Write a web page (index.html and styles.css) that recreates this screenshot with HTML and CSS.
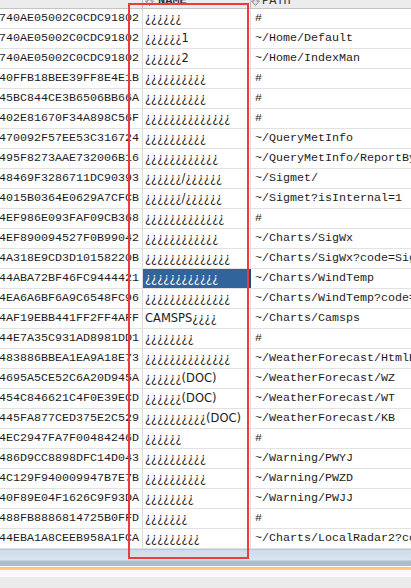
FILE: index.html
```html
<!DOCTYPE html>
<html lang="en">
<head>
    <meta charset="UTF-8">
    <meta name="viewport" content="width=device-width, initial-scale=1.0">
    <title>Menu Table</title>
    <link rel="stylesheet" href="styles.css">
</head>
<body>

    <div class="view">
        <div class="grid">
            <!-- column headers, scrolled mostly out of view -->
            <div class="head">
                <div class="hcell"></div>
                <div class="hcell name-head">
                    <svg class="sort" width="9" height="9" viewBox="0 0 9 9"><path d="M3 0.5 H6 V4 H8.5 L4.5 8.5 L0.5 4 H3 Z"/></svg>
                    <span class="htext bold">NAME</span>
                </div>
                <div class="hcell path-head">
                    <svg class="sort" width="9" height="9" viewBox="0 0 9 9"><path d="M3 0.5 H6 V4 H8.5 L4.5 8.5 L0.5 4 H3 Z"/></svg>
                    <span class="htext">PATH</span>
                </div>
            </div>

            <div class="row"><div class="id">740AE05002C0CDC91802</div><div class="name">¿¿¿¿¿¿</div><div class="path">#</div></div>
            <div class="row"><div class="id">740AE05002C0CDC91802</div><div class="name">¿¿¿¿¿¿1</div><div class="path">~/Home/Default</div></div>
            <div class="row"><div class="id">740AE05002C0CDC91802</div><div class="name">¿¿¿¿¿¿2</div><div class="path">~/Home/IndexMan</div></div>
            <div class="row"><div class="id">40FFB18BEE39FF8E4E1B</div><div class="name">¿¿¿¿¿¿¿¿¿¿</div><div class="path">#</div></div>
            <div class="row"><div class="id">45BC844CE3B6506BB66A</div><div class="name">¿¿¿¿¿¿¿¿¿¿</div><div class="path">#</div></div>
            <div class="row"><div class="id">402E81670F34A898C56F</div><div class="name">¿¿¿¿¿¿¿¿¿¿¿¿¿¿</div><div class="path">#</div></div>
            <div class="row"><div class="id">470092F57EE53C316724</div><div class="name">¿¿¿¿¿¿¿¿¿¿</div><div class="path">~/QueryMetInfo</div></div>
            <div class="row"><div class="id">495F8273AAE732006B16</div><div class="name">¿¿¿¿¿¿¿¿¿¿¿¿</div><div class="path">~/QueryMetInfo/ReportByStation</div></div>
            <div class="row"><div class="id">48469F3286711DC90393</div><div class="name">¿¿¿¿¿¿/¿¿¿¿¿¿</div><div class="path">~/Sigmet/</div></div>
            <div class="row"><div class="id">4015B0364E0629A7CFCB</div><div class="name">¿¿¿¿¿¿/¿¿¿¿¿¿</div><div class="path">~/Sigmet?isInternal=1</div></div>
            <div class="row"><div class="id">4EF986E093FAF09CB368</div><div class="name">¿¿¿¿¿¿¿¿¿¿¿¿¿</div><div class="path">#</div></div>
            <div class="row"><div class="id">4EF890094527F0B99042</div><div class="name">¿¿¿¿¿¿¿¿¿¿¿¿</div><div class="path">~/Charts/SigWx</div></div>
            <div class="row"><div class="id">4A318E9CD3D10158220B</div><div class="name">¿¿¿¿¿¿¿¿¿¿¿¿¿¿</div><div class="path">~/Charts/SigWx?code=SigWxInt</div></div>
            <div class="row"><div class="id">44ABA72BF46FC9444421</div><div class="name selected">¿¿¿¿¿¿¿¿¿¿¿¿</div><div class="path">~/Charts/WindTemp</div></div>
            <div class="row"><div class="id">4EA6A6BF6A9C6548FC96</div><div class="name">¿¿¿¿¿¿¿¿¿¿¿¿¿¿</div><div class="path">~/Charts/WindTemp?code=Int</div></div>
            <div class="row"><div class="id">4AF19EBB441FF2FF4AFF</div><div class="name">CAMSPS¿¿¿¿</div><div class="path">~/Charts/Camsps</div></div>
            <div class="row"><div class="id">44E7A35C931AD8981DD1</div><div class="name">¿¿¿¿¿¿¿¿</div><div class="path">#</div></div>
            <div class="row"><div class="id">483886BBEA1EA9A18E73</div><div class="name">¿¿¿¿¿¿¿¿¿¿¿¿¿¿</div><div class="path">~/WeatherForecast/HtmlBrowse</div></div>
            <div class="row"><div class="id">4695A5CE52C6A20D945A</div><div class="name">¿¿¿¿¿¿(DOC)</div><div class="path">~/WeatherForecast/WZ</div></div>
            <div class="row"><div class="id">454C846621C4F0E39ECD</div><div class="name">¿¿¿¿¿¿(DOC)</div><div class="path">~/WeatherForecast/WT</div></div>
            <div class="row"><div class="id">445FA877CED375E2C529</div><div class="name">¿¿¿¿¿¿¿¿¿¿(DOC)</div><div class="path">~/WeatherForecast/KB</div></div>
            <div class="row"><div class="id">4EC2947FA7F00484246D</div><div class="name">¿¿¿¿¿¿</div><div class="path">#</div></div>
            <div class="row"><div class="id">486D9CC8898DFC14D043</div><div class="name">¿¿¿¿¿¿¿¿¿¿</div><div class="path">~/Warning/PWYJ</div></div>
            <div class="row"><div class="id">4C129F940009947B7E7B</div><div class="name">¿¿¿¿¿¿¿¿¿¿</div><div class="path">~/Warning/PWZD</div></div>
            <div class="row"><div class="id">40F89E04F1626C9F93DA</div><div class="name">¿¿¿¿¿¿¿¿</div><div class="path">~/Warning/PWJJ</div></div>
            <div class="row"><div class="id">488FB8886814725B0FFD</div><div class="name">¿¿¿¿¿¿¿</div><div class="path">#</div></div>
            <div class="row"><div class="id">44EBA1A8CEEB958A1FCA</div><div class="name">¿¿¿¿¿¿¿¿¿</div><div class="path">~/Charts/LocalRadar2?code=Z</div></div>
        </div>

        <!-- horizontal scrollbar and status strip -->
        <div class="hscroll"></div>
        <div class="status"></div>

        <!-- red annotation box drawn over the NAME column -->
        <div class="mark"></div>
    </div>

</body>
</html>
```

FILE: styles.css
```css
body {
    margin: 0;
    background-color: #ebebeb;
    overflow: hidden;
}
.view {
    position: relative;
    width: 411px;
    height: 588px;
    overflow: hidden;
}
.grid {
    background-color: #fff;
    overflow: hidden;
}
.head, .row {
    display: grid;
    grid-template-columns: 143px 108px 420px;
}
.head {
    height: 22px;
    margin-top: -13px;
    background-color: #ececec;
    border-bottom: 1px solid #c4c4c4;
    box-sizing: border-box;
}
.hcell {
    display: flex;
    align-items: flex-end;
    gap: 4px;
    border-right: 1px solid #c0c0c0;
    padding-bottom: 1px;
    box-sizing: border-box;
}
.name-head {
    padding-left: 2px;
}
.path-head {
    padding-left: 0;
    gap: 2px;
}
.sort {
    margin-bottom: 1px;
}
.sort path {
    fill: #e2e2e2;
    stroke: #8c8c8c;
    stroke-width: 1;
}
.htext {
    font-family: "Liberation Mono", monospace;
    font-size: 12px;
    line-height: 12px;
    color: #333;
}
.bold {
    font-weight: bold;
}
.row {
    height: 20px;
    border-bottom: 1px solid #e2e2e2;
    box-sizing: border-box;
}
.row > div {
    border-right: 1px solid #dadada;
    box-sizing: border-box;
    line-height: 19px;
    white-space: nowrap;
    overflow: hidden;
    color: #1c1c1c;
}
.id, .path {
    font-family: "Liberation Mono", monospace;
    font-size: 11.67px;
}
.id {
    text-indent: -1px;
}
.path {
    padding-left: 4px;
}
.name {
    font-family: "DejaVu Sans", sans-serif;
    font-size: 11.5px;
    padding-left: 2px;
}
.row > .selected {
    background-color: #31649a;
    color: #fff;
    border-right: 2px solid #1f4c7e;
}
.hscroll {
    height: 18px;
    border-top: 1px solid #b7c6d8;
    box-sizing: border-box;
    background: linear-gradient(#cfdbea 0, #d9e3ef 8px, #dbe4ef 10px, #abbed4 11px, #a9bcd2 16px, #ffffff 16px);
}
.status {
    height: 21px;
    background: linear-gradient(#f6c46f 0, #f8d28e 3px, #fafafa 3px, #fafafa 10px, #ebebeb 10px);
}
.mark {
    position: absolute;
    left: 128px;
    top: 3px;
    width: 121px;
    height: 556px;
    border: 2px solid #ee3a3a;
    box-sizing: border-box;
}
```
